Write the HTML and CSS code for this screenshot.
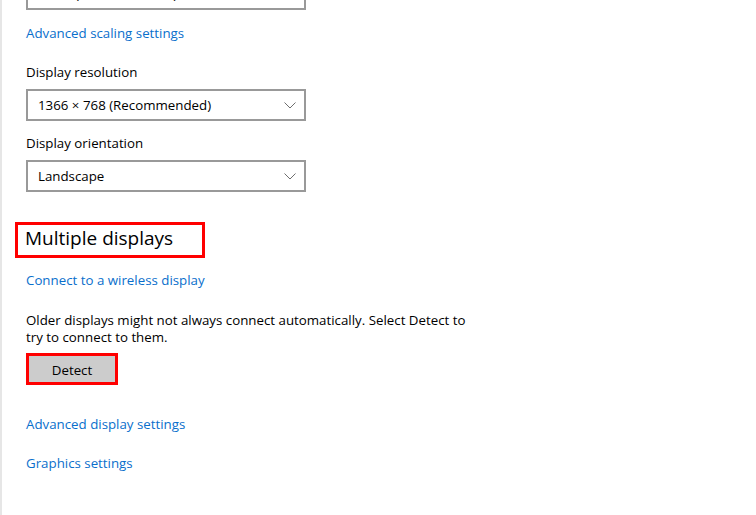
FILE: index.html
```html
<!DOCTYPE html>
<html lang="en">
<head>
<meta charset="utf-8">
<title>Display settings</title>
<link rel="stylesheet" href="styles.css">
</head>
<body>
<main class="page">
  <div class="select select-top">
    <span class="select-value">100% (Recommended)</span>
    <svg class="chevron" width="12" height="7" viewBox="0 0 12 7"><polyline points="0.5,0.5 6,6 11.5,0.5" fill="none" stroke="#6e6e6e" stroke-width="1"/></svg>
  </div>
  <a class="link link-scaling" href="#">Advanced scaling settings</a>

  <div class="label label-res">Display resolution</div>
  <div class="select">
    <span class="select-value">1366 × 768 (Recommended)</span>
    <svg class="chevron" width="12" height="7" viewBox="0 0 12 7"><polyline points="0.5,0.5 6,6 11.5,0.5" fill="none" stroke="#6e6e6e" stroke-width="1"/></svg>
  </div>

  <div class="label label-orient">Display orientation</div>
  <div class="select">
    <span class="select-value">Landscape</span>
    <svg class="chevron" width="12" height="7" viewBox="0 0 12 7"><polyline points="0.5,0.5 6,6 11.5,0.5" fill="none" stroke="#6e6e6e" stroke-width="1"/></svg>
  </div>

  <h2 class="heading">Multiple displays</h2>

  <a class="link link-wireless" href="#">Connect to a wireless display</a>

  <p class="desc">Older displays might not always connect automatically. Select Detect to try to connect to them.</p>
  <button class="btn-detect" type="button">Detect</button>

  <a class="link link-advanced" href="#">Advanced display settings</a>
  <a class="link link-graphics" href="#">Graphics settings</a>
</main>
</body>
</html>
```
FILE: styles.css
```css
html, body {
  margin: 0;
  padding: 0;
  background: #ffffff;
}
body {
  font-family: "Open Sans", "Noto Sans", "Liberation Sans", sans-serif;
  font-size: 13.3px;
  color: #000000;
  overflow: hidden;
  height: 515px;
}
.page {
  display: flex;
  flex-direction: column;
  align-items: flex-start;
  box-sizing: border-box;
  height: 515px;
  border-left: 2px solid #e6e6e6;
  padding-left: 24px;
}
.select {
  box-sizing: border-box;
  width: 280px;
  height: 32px;
  border: 2px solid #999999;
  display: flex;
  align-items: center;
  justify-content: space-between;
  padding: 0 8px 0 10px;
  margin-top: 7px;
}
.select-top {
  margin-top: -22px;
}
.select-value {
  line-height: 20px;
}
.chevron {
  display: block;
}
.link {
  color: #0a6fcc;
  text-decoration: none;
  line-height: 20px;
}
.label {
  line-height: 20px;
}
.link-scaling { margin-top: 13px; }
.label-res { margin-top: 19px; }
.label-orient { margin-top: 12px; }
.heading {
  box-sizing: border-box;
  margin: 30px 0 0 -11px;
  height: 36px;
  width: 190px;
  border: 3px solid #ff0000;
  padding-left: 7px;
  font-size: 19px;
  font-weight: 400;
  line-height: 26px;
}
.link-wireless { margin-top: 12px; }
.desc {
  margin: 22px 0 0 0;
  max-width: 445px;
  line-height: 17px;
}
.btn-detect {
  box-sizing: border-box;
  margin-top: 7px;
  width: 92px;
  height: 32px;
  border: 3px solid #ff0000;
  background: #cccccc;
  font-family: inherit;
  font-size: 13.3px;
  color: #000000;
  padding: 2px 0 0 0;
}
.link-advanced { margin-top: 29px; }
.link-graphics { margin-top: 19px; }
```
